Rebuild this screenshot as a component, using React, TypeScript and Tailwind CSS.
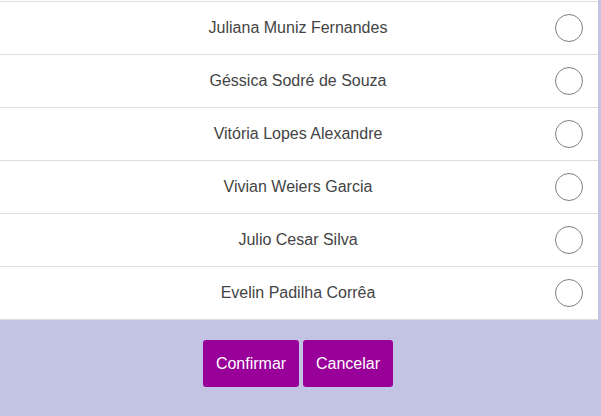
import React, { useState } from 'react';

const names = [
    'Juliana Muniz Fernandes',
    'Géssica Sodré de Souza',
    'Vitória Lopes Alexandre',
    'Vivian Weiers Garcia',
    'Julio Cesar Silva',
    'Evelin Padilha Corrêa',
];

export default function App() {
    const [selected, setSelected] = useState<number | null>(null);

    return (
        <div className="w-[601px] h-[416px] bg-[#c3c3e4] font-['Liberation_Sans',Arial,sans-serif] overflow-hidden">
            <div className="w-[598px] bg-white pt-px">
                {names.map((name, i) => (
                    <div
                        key={name}
                        className="pr-[2px] grid grid-cols-[1fr_auto_1fr] items-center h-[53px] border-t border-[#dddddd] last:border-b last:h-[54px]"
                    >
                        <div />
                        <span className="text-[16px] text-[#444444]">{name}</span>
                        <div className="flex justify-end pr-[13px]">
                            <button
                                type="button"
                                onClick={() => setSelected(i)}
                                className="w-[28px] h-[28px] rounded-full border border-[#808080] bg-white flex items-center justify-center"
                            >
                                {selected === i && <span className="w-[14px] h-[14px] rounded-full bg-[#990099]" />}
                            </button>
                        </div>
                    </div>
                ))}
            </div>
            <div className="w-[596px] flex justify-center gap-1 pt-5">
                <button className="h-[47px] w-[96px] rounded-[3px] bg-[#990099] text-white text-[16px]">Confirmar</button>
                <button className="h-[47px] w-[90px] rounded-[3px] bg-[#990099] text-white text-[16px]">Cancelar</button>
            </div>
        </div>
    );
}
